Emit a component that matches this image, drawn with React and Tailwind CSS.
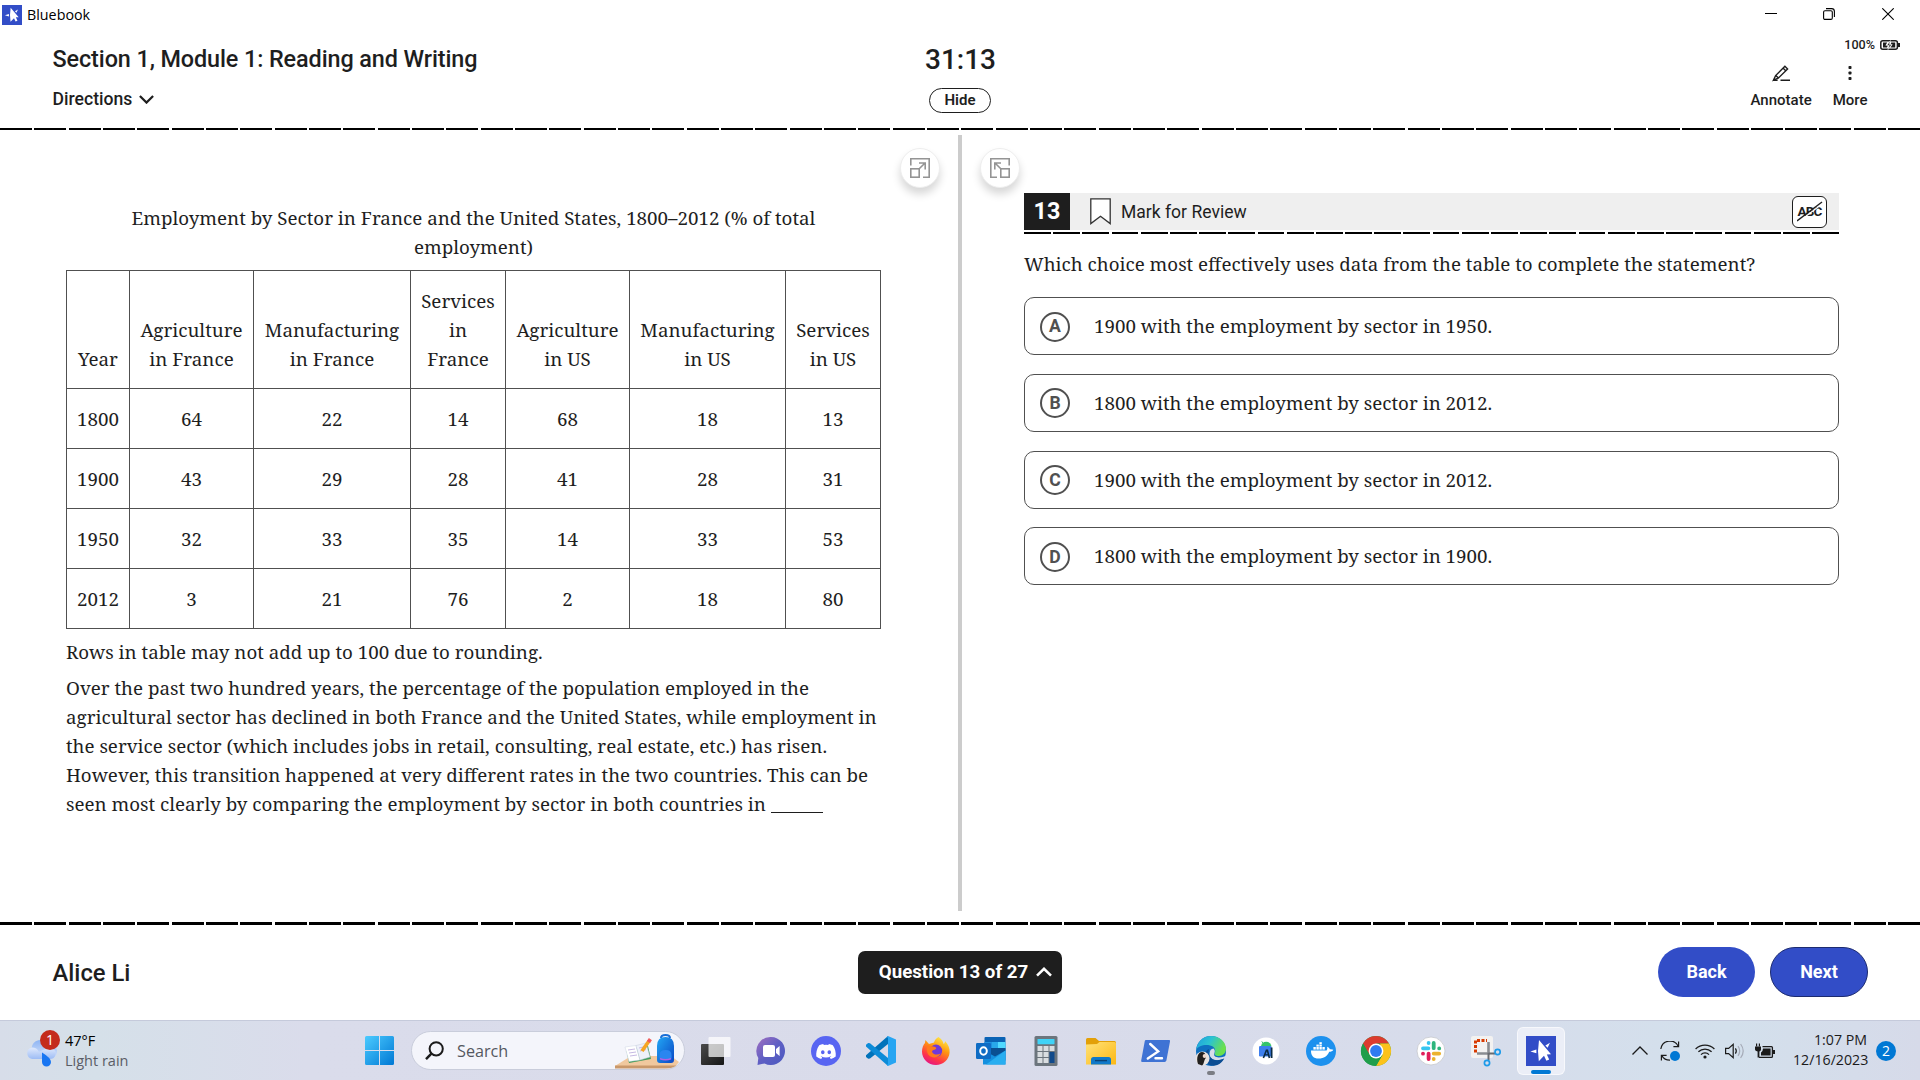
import React from "react";

const SERIF = "font-['Noto_Serif',serif]";

const columns = [
  { label: ["Year"], w: "w-[63px]" },
  { label: ["Agriculture", "in France"], w: "w-[124px]" },
  { label: ["Manufacturing", "in France"], w: "w-[157px]" },
  { label: ["Services", "in", "France"], w: "w-[95px]" },
  { label: ["Agriculture", "in US"], w: "w-[124px]" },
  { label: ["Manufacturing", "in US"], w: "w-[156px]" },
  { label: ["Services", "in US"], w: "w-[95px]" },
];

const rows = [
  [1800, 64, 22, 14, 68, 18, 13],
  [1900, 43, 29, 28, 41, 28, 31],
  [1950, 32, 33, 35, 14, 33, 53],
  [2012, 3, 21, 76, 2, 18, 80],
];

const passage = [
  "Over the past two hundred years, the percentage of the population employed in the",
  "agricultural sector has declined in both France and the United States, while employment in",
  "the service sector (which includes jobs in retail, consulting, real estate, etc.) has risen.",
  "However, this transition happened at very different rates in the two countries. This can be",
];

const choices = [
  ["A", "1900 with the employment by sector in 1950."],
  ["B", "1800 with the employment by sector in 2012."],
  ["C", "1900 with the employment by sector in 2012."],
  ["D", "1800 with the employment by sector in 1900."],
];

function Star({ className }) {
  return (
    <svg viewBox="0 0 30 30" className={className}>
      <rect width="30" height="30" fill="#324dc7" />
      <path d="M13 4L25 18.2L20.8 18.4L23.2 23.6L20.4 24.8L18 19.8L12.8 25.2L12 15Z" fill="#fff" />
      <path d="M4.4 15.4L10.4 13.4V17.2Z" fill="#fff" />
      <path d="M24 6.8L19.4 9.4L21.6 11.8Z" fill="#fff" />
    </svg>
  );
}

function TitleBar() {
  return (
    <div className="flex h-7 items-start justify-between">
      <div className="flex items-center gap-[5px] pt-1 pl-[2px]">
        <Star className="size-5" />
        <span className="pt-px font-['Open_Sans',sans-serif] text-[14.3px] leading-5 text-black">Bluebook</span>
      </div>
      <div className="flex pt-2 pr-[26px]">
        <svg viewBox="0 0 12 12" className="mr-[46px] size-3" stroke="#000" fill="none"><path d="M0 5.5H12" /></svg>
        <svg viewBox="0 0 12 12" className="mr-[47px] size-3" stroke="#000" fill="none" strokeWidth="1.1">
          <rect x=".6" y="2.7" width="8.7" height="8.7" rx="1.4" />
          <path d="M3 .6H8.6A2.8 2.8 0 0 1 11.4 3.4V9" />
        </svg>
        <svg viewBox="0 0 12 12" className="size-3" stroke="#000" fill="none" strokeWidth="1.1"><path d="M.3 .3L11.7 11.7M11.7 .3L.3 11.7" /></svg>
      </div>
    </div>
  );
}

function Header() {
  return (
    <header className="grid h-[100px] grid-cols-3 text-[#1e1e1e]">
      <div className="pl-[52.5px]">
        <h1 className="pt-[16px] text-[23.4px] leading-[30px] font-medium tracking-[-0.1px]">Section 1, Module 1: Reading and Writing</h1>
        <div className="mt-[14px] flex items-center gap-[7px] text-[17.6px] leading-[22px] font-medium">
          Directions
          <svg viewBox="0 0 15 9" className="h-[9px] w-[15px]" fill="none" stroke="#1e1e1e" strokeWidth="2.2"><path d="M.9 1L7.5 7.6L14.1 1" /></svg>
        </div>
      </div>
      <div className="flex flex-col items-center">
        <div className="pt-[15px] pl-px text-[28px] leading-[34px] font-medium">31:13</div>
        <button className="mt-[11px] flex h-[25px] w-[62px] justify-center rounded-full border border-[#1e1e1e] text-[15px] leading-[23px] font-semibold">Hide</button>
      </div>
      <div className="flex flex-col items-end">
        <div className="flex items-center gap-[5px] pt-[9px] pr-5 text-[12.6px] leading-[15px] font-medium">
          100%
          <svg viewBox="0 0 20 10" className="h-[10px] w-5">
            <rect x=".8" y=".8" width="16.6" height="8.4" rx="2" fill="none" stroke="#1e1e1e" strokeWidth="1.5" />
            <rect x="18" y="3" width="2" height="4" fill="#1e1e1e" />
            <path d="M3 2.6H7.2L5.4 5.6H7.8L7 7.6H3ZM11.2 2.6H15.2V7.4H10.5L12.6 4.4H10.6Z" fill="#1e1e1e" />
            <path d="M10.4 .6L6.8 5.4H9.2L8 9.6L11.8 4.4H9.4Z" fill="#1e1e1e" stroke="#fff" strokeWidth=".6" />
          </svg>
        </div>
        <div className="flex gap-[21px] pt-[13px] pr-[52.5px] text-[15px] leading-[18px] font-medium">
          <div className="flex flex-col items-center gap-[9px]">
            <svg viewBox="0 0 18 17" className="h-[17px] w-[18px]" fill="none" stroke="#1e1e1e" strokeWidth="1.4">
              <path d="M1.4 15.2L3.6 10.6L12.9 1.2L15.6 3.9L6.2 13.2L1.4 15.2ZM3.8 10.4L6.4 13M11 3.1L13.7 5.8" />
              <path d="M8.5 15.2H18M1 15.2H5.6" />
            </svg>
            Annotate
          </div>
          <div className="flex flex-col items-center gap-[9px]">
            <svg viewBox="0 0 4 17" className="h-[17px] w-1" fill="#1e1e1e">
              <rect x=".5" y="1" width="3" height="3" rx=".8" /><rect x=".5" y="6.5" width="3" height="3" rx=".8" /><rect x=".5" y="12" width="3" height="3" rx=".8" />
            </svg>
            More
          </div>
        </div>
      </div>
    </header>
  );
}

function ExpandButton({ flip }) {
  return (
    <button className="flex size-10 items-center justify-center rounded-full border border-[#eee] bg-white shadow-[0_6px_8px_rgba(0,0,0,0.16)]">
      <svg viewBox="0 0 20 20" className={flip ? "size-5 -scale-x-100" : "size-5"} fill="none" stroke="#949494" strokeWidth="1.6">
        <path d="M.8 7.5V.8H19.2V19.2H13" />
        <rect x=".8" y="10.8" width="8.4" height="8.4" />
        <path d="M9.2 10.8L15 5M9 5H15.2V11.4" />
      </svg>
    </button>
  );
}

function DataTable() {
  return (
    <table className="mt-[9px] w-[815px] table-fixed border-collapse text-center">
      <thead>
        <tr className="h-[118px]">
          {columns.map((c, i) => (
            <th key={i} className={`${c.w} border border-[#505050] p-0 pb-[15px] align-bottom font-normal`}>
              {c.label.map((l) => <div key={l}>{l}</div>)}
            </th>
          ))}
        </tr>
      </thead>
      <tbody>
        {rows.map((r) => (
          <tr key={r[0]} className="h-[60px]">
            {r.map((v, i) => <td key={i} className="border border-[#505050] p-0 pb-px">{v}</td>)}
          </tr>
        ))}
      </tbody>
    </table>
  );
}

function Passage() {
  return (
    <section className="flex w-[958px] justify-between pl-[66px]">
      <div className={`${SERIF} w-[815px] pt-[73px] text-[18.76px] leading-[29px] whitespace-nowrap text-[#1e1e1e]`}>
        <div className="text-center">
          <div>Employment by Sector in France and the United States, 1800–2012 (% of total</div>
          <div>employment)</div>
        </div>
        <DataTable />
        <p className="pt-[8px]">Rows in table may not add up to 100 due to rounding.</p>
        <div className="pt-[7px]">
          {passage.map((l) => <p key={l}>{l}</p>)}
          <p>seen most clearly by comparing the employment by sector in both countries in <span className="inline-block h-[24px] w-[52px] border-b border-[#1e1e1e] align-top" /></p>
        </div>
      </div>
      <div className="pt-[18px] pr-[18px]"><ExpandButton /></div>
    </section>
  );
}

function Question() {
  return (
    <section className="flex flex-1 pl-[17.5px]">
      <div className="w-[44.5px] pt-[18px]"><ExpandButton flip /></div>
      <div className="w-[815px] pt-[63px] text-[#1e1e1e]">
        <div className="flex h-[37px] items-center bg-[#efefef]">
          <div className="flex h-full w-[46px] items-center justify-center bg-[#1e1e1e] text-[23.4px] font-bold text-white">13</div>
          <svg viewBox="0 0 21 27" className="ml-5 h-[27px] w-[21px]" fill="#fff" stroke="#333" strokeWidth="1.3"><path d="M.8 .8H20.2V25.6L10.5 18.2L.8 25.6Z" /></svg>
          <span className="ml-[10px] flex-1 pt-[2px] text-[17.55px]">Mark for Review</span>
          <div className="relative mr-3 flex h-8 w-[35px] items-center justify-center rounded-md border-[1.5px] border-[#1e1e1e] bg-white text-[13.5px] font-bold tracking-[-0.8px]">
            ABC
            <svg viewBox="0 0 26 21" className="absolute h-[21px] w-[26px]"><path d="M1 21.2L26 2.2" stroke="#fff" strokeWidth="1.4" /><path d="M0 20L25 1" stroke="#1e1e1e" strokeWidth="1.4" /></svg>
          </div>
        </div>
        <div className="mt-[2px] h-[2px] bg-[repeating-linear-gradient(90deg,#000_0_26.8px,transparent_26.8px_29.19px)]" />
        <p className={`${SERIF} pt-[15px] text-[18.75px] leading-[29px] whitespace-nowrap`}>
          Which choice most effectively uses data from the table to complete the statement?
        </p>
        <div className="mt-[19px] flex flex-col gap-[18.8px]">
          {choices.map(([k, t]) => (
            <div key={k} className="flex h-[58px] items-center rounded-[10px] border border-[#505050] pl-[15px]">
              <span className="mt-px flex size-[30px] items-center justify-center rounded-full border-2 border-[#505050] text-[17.6px] font-bold text-[#505050]">{k}</span>
              <span className={`${SERIF} ml-6 pb-px text-[18.75px] leading-[29px] whitespace-nowrap`}>{t}</span>
            </div>
          ))}
        </div>
      </div>
    </section>
  );
}

function Footer() {
  return (
    <footer className="grid h-[95px] grid-cols-3 items-start text-[#1e1e1e]">
      <div className="pt-[33px] pl-[52.5px] text-[23.8px] leading-[30px] font-medium">Alice Li</div>
      <div className="flex justify-center pt-[26px]">
        <button className="flex h-[43px] w-[204px] items-center justify-center gap-[8px] rounded-[7px] bg-[#1e1e1e] pb-px pl-[11px] text-[18.7px] leading-[26px] font-bold whitespace-nowrap text-white">
          Question 13 of 27
          <svg viewBox="0 0 16 10" className="h-[10px] w-4" fill="none" stroke="#fff" strokeWidth="2.6"><path d="M1 8.6L8 1.8L15 8.6" /></svg>
        </button>
      </div>
      <div className="flex justify-end gap-[15px] pt-[22px] pr-[52px] text-[18px] font-bold text-white">
        <button className="h-[50px] w-[97px] rounded-full bg-[#324dc7] pb-px">Back</button>
        <button className="h-[50px] w-[98px] rounded-full border border-[#1c2b70] bg-[#324dc7] pb-px">Next</button>
      </div>
    </footer>
  );
}

const Ico = ({ children }) => <svg viewBox="0 0 30 30" className="size-[30px] overflow-visible">{children}</svg>;

function Gradients() {
  return (
    <svg className="absolute size-0">
      <defs>
        <linearGradient id="win" x1="0" y1="0" x2="1" y2="1"><stop offset="0" stopColor="#4ccbff" /><stop offset="1" stopColor="#0078d4" /></linearGradient>
        <linearGradient id="cloud" x1="0" y1="0" x2="0" y2="1"><stop offset="0" stopColor="#8db4f3" /><stop offset="1" stopColor="#dbe6fb" /></linearGradient>
        <linearGradient id="cloudFront" x1="0" y1="0" x2="0" y2="1"><stop offset="0" stopColor="#dfe9fc" /><stop offset="1" stopColor="#9dbcf5" /></linearGradient>
        <linearGradient id="chat" x1="0" y1="0" x2="1" y2="1"><stop offset="0" stopColor="#a26fc0" /><stop offset=".5" stopColor="#5f5fc4" /><stop offset="1" stopColor="#4a58c0" /></linearGradient>
        <linearGradient id="ff" x1=".8" y1="0" x2=".3" y2="1"><stop offset="0" stopColor="#fff44f" /><stop offset=".4" stopColor="#ff980e" /><stop offset=".75" stopColor="#ff3647" /><stop offset="1" stopColor="#e31587" /></linearGradient>
        <linearGradient id="folder" x1="0" y1="0" x2="1" y2="1"><stop offset="0" stopColor="#ffe27a" /><stop offset="1" stopColor="#fcb813" /></linearGradient>
        <linearGradient id="edge" x1="0" y1="0" x2="1" y2=".4"><stop offset="0" stopColor="#1d9de0" /><stop offset=".5" stopColor="#2cc3d0" /><stop offset="1" stopColor="#6be04b" /></linearGradient>
        <linearGradient id="bag" x1="0" y1="0" x2="1" y2="1"><stop offset="0" stopColor="#22a7f5" /><stop offset="1" stopColor="#0b47c4" /></linearGradient>
        <linearGradient id="tv" x1="0" y1="0" x2="1" y2="1"><stop offset="0" stopColor="#4a4a4a" /><stop offset="1" stopColor="#161616" /></linearGradient>
      </defs>
    </svg>
  );
}

const apps = [
  <Ico key="tv"><rect y="8" width="23" height="21" rx="1" fill="url(#tv)" /><rect x="7.5" y="1" width="22" height="20" rx="1" fill="#fff" fillOpacity=".72" /></Ico>,
  <Ico key="chat"><path d="M15 1A14 14 0 1 1 8.5 27.4L1.5 29L2.3 22A14 14 0 0 1 15 1Z" fill="url(#chat)" /><rect x="7" y="9" width="12" height="12" rx="2" fill="#fff" /><path d="M20 13L23.6 10V20L20 17Z" fill="#fff" /></Ico>,
  <Ico key="dis"><circle cx="15" cy="15" r="15" fill="#5865f2" /><path transform="translate(5.2 5.6) scale(.82)" d="M20.3 4.4A19.8 19.8 0 0 0 15.4 2.9l-.6 1.2a18.3 18.3 0 0 0-5.5 0L8.6 2.9A19.7 19.7 0 0 0 3.7 4.4C.5 9 -.3 13.6.1 18.1a19.9 19.9 0 0 0 6 3l1.3-2-1.9-.9.4-.3a14.2 14.2 0 0 0 12.1 0l.4.3-1.9.9 1.3 2a19.8 19.8 0 0 0 6-3c.5-5.2-.8-9.7-3.5-13.7zM8 15.3c-1.2 0-2.1-1.1-2.1-2.4s.9-2.4 2.1-2.4 2.2 1.1 2.2 2.4-1 2.4-2.2 2.4zm8 0c-1.2 0-2.2-1.1-2.2-2.4s1-2.4 2.2-2.4 2.1 1.1 2.1 2.4-.9 2.4-2.1 2.4z" fill="#fff" /></Ico>,
  <Ico key="code"><path d="M22 0L0 19.2V21L2.2 22.8L4 22.6L22 8Z" fill="#0072ba" /><path d="M22 30L0 10.6V8.8L2.2 7L4 7.2L22 22Z" fill="#0c8bd8" /><path d="M22 0L30 3.6V26.4L22 30L20.5 28.5H22V1.5H20.5Z" fill="#27a5f2" /></Ico>,
  <Ico key="ff"><path d="M17.5 1C21 3 22.2 5.8 22.6 8C23.6 7.4 24 6.4 24 5C27 8 29 12 28.6 16.5C28 24 22 29 15 29C7 29 1 23 1 15.5C1 12 2.4 8.6 4 7L4.4 4L8 8L13 6.4C13.6 4 15.4 2 17.5 1Z" fill="url(#ff)" /><circle cx="15" cy="14.8" r="6.2" fill="#7139d8" /><path d="M6.5 9.2L12 10.4C14.4 10.6 15.4 11.4 15.2 12.4C14.6 14 11.6 13.4 11 15.4C11.4 18.6 16.4 19.4 19.6 17.6C18.4 22 10.4 23 7.2 18.4C5.6 15.8 5.4 12 6.5 9.2Z" fill="#ff7a1c" /></Ico>,
  <Ico key="out"><rect x="8.5" y="1" width="21" height="24" rx="1" fill="#0a63b5" /><rect x="8.5" y="6" width="14" height="7" fill="#1f8fe0" /><rect x="22" y="6" width="7.5" height="7" fill="#50d9ff" /><rect x="16" y="6" width="6" height="7" fill="#28a8ea" /><path d="M7 18L29.5 14V28.6H7Z" fill="#1490df" /><path d="M8 14.5L19 20.4L29.5 14.5V12H8Z" fill="#0a4f92" /><path d="M29.5 14.5V28.6H10Z" fill="#29aef0" /><rect y="7" width="15" height="16" rx="1.2" fill="#0f6cc4" /><ellipse cx="7.5" cy="15" rx="3.3" ry="3.7" fill="none" stroke="#fff" strokeWidth="2" /></Ico>,
  <Ico key="calc"><rect x="3.5" width="23" height="30" rx="1.5" fill="#6c757d" /><rect x="6.5" y="3" width="17" height="5.2" rx=".6" fill="#3fd3f7" /><g fill="#d9dde0"><rect x="6.5" y="10" width="5" height="5" /><rect x="12.5" y="10" width="5" height="5" /><rect x="18.5" y="10" width="5" height="5" /><rect x="6.5" y="16" width="5" height="5" /><rect x="12.5" y="16" width="5" height="5" /><rect x="6.5" y="22" width="5" height="5" /><rect x="12.5" y="22" width="5" height="5" /></g><rect x="18.5" y="16" width="5" height="11" fill="#114a8b" /></Ico>,
  <Ico key="files"><path d="M0 3.5Q0 2 1.5 2H9.5L13 5H28.5Q30 5 30 6.5V12H0Z" fill="#e3a008" /><path d="M0 8.5L11 8L13.5 6H28.5Q30 6 30 7.5V28.4H0Z" fill="url(#folder)" /><path d="M5 28.4V23.5Q5 21 7.5 21H22.5Q25 21 25 23.5V28.4Z" fill="#0f79c9" /><path d="M9 24.6H21" stroke="#0a4275" strokeWidth="1.4" /></Ico>,
  <Ico key="ps"><path d="M5 4H28Q29.4 4 29 5.4L25.4 24.6Q25 26 23.6 26H1.4Q-.2 26 .2 24.4L3.8 5Q4 4 5 4Z" fill="#3f73d4" /><path d="M9.2 8L17.2 15.4L6.8 22.6M14.5 22.2H21" fill="none" stroke="#fff" strokeWidth="2.4" strokeLinecap="round" /></Ico>,
  <div key="edge" className="relative flex flex-col items-center">
    <Ico><circle cx="15" cy="15" r="15" fill="#0f6fc0" /><path d="M.2 14C1 6 7 0 15 0C23.6 0 30 6 30 12.6C30 17.4 26.6 20 23 20C20 20 18.2 18.8 18.6 17.4C20 15 19.4 10.4 14 9.4C8 8.4 2 10 .2 14Z" fill="url(#edge)" /><path d="M18.4 17C16.8 21.4 22 22.4 28.4 20.4C30.4 19 31 21 28.4 22.4C21 26 13 24 13.6 17C14 14 15 12.6 17.6 12.4C19.2 14 19 15.6 18.4 17Z" fill="#d8dcea" /><path d="M28.2 22.6C24 31 15 31 11 27.6C6 23 8 15 13 13C11 20 16 27.6 28.2 22.6Z" fill="#0c4d93" /><circle cx="6.5" cy="22.5" r="7" fill="#e8e4e2" /><path d="M2 28C0 22 2 16 6 16C10 16 9 20 10 22C8 23 8 29 6 29.4Z" fill="#22201f" /><circle cx="8.6" cy="20" r="1.9" fill="#f0d9cc" /></Ico>
    <span className="absolute top-[35px] h-1 w-2 rounded-full bg-[#7b7d84]" />
  </div>,
  <Ico key="as"><circle cx="15" cy="15" r="13.5" fill="#fff" /><path d="M10 10.4A5.2 4.6 0 0 1 20.4 10.4Z" fill="#35c46c" /><path d="M10.8 5.4L12.4 7.6" stroke="#35c46c" strokeWidth="1" /><rect x="8" y="10" width="12.5" height="10.5" rx="1.2" fill="#3d7fee" /><path d="M12.4 22L15.4 14.2H16.4L18.4 22" stroke="#0b2b44" strokeWidth="1.6" fill="none" /><path d="M13.8 18.8H17.4" stroke="#0b2b44" strokeWidth="1.2" /><path d="M20.6 11.5V22" stroke="#0b2b44" strokeWidth="1.8" /></Ico>,
  <Ico key="dk"><circle cx="15" cy="15" r="15" fill="#1d91ee" /><path d="M5 14.4H20.6C21.6 13.4 21.4 11.8 21 10.8C22.6 11.2 23.6 12.2 23.8 13.2C25 13 26.4 13.2 27.4 13.8C26.6 15.2 25 15.8 23.2 15.8C21.6 20 18 22.6 12.6 22.6C7.6 22.6 4.8 19.4 5 14.4Z" fill="#fff" /><g fill="#fff"><rect x="7.4" y="11" width="2.4" height="2.6" /><rect x="10.4" y="11" width="2.4" height="2.6" /><rect x="13.4" y="11" width="2.4" height="2.6" /><rect x="16.4" y="11" width="2.4" height="2.6" /><rect x="10.4" y="8.6" width="2.4" height="2" /><rect x="13.4" y="8.6" width="2.4" height="2" /><rect x="13.4" y="6.2" width="2.4" height="2" /></g></Ico>,
  <Ico key="chr"><circle cx="15" cy="15" r="15" fill="#1f9e4b" /><path d="M15 0A15 15 0 0 1 28 7.5H15L8.5 18.7L2 7.5A15 15 0 0 1 15 0Z" fill="#dc3b2e" /><path d="M28 7.5A15 15 0 0 1 15 30L21.5 18.7L19 7.5Z" fill="#fcc21b" /><path d="M2 7.5L8.5 18.7L15 22.5L21.5 18.7L15 30A15 15 0 0 1 2 7.5Z" fill="#1f9e4b" /><circle cx="15" cy="15" r="7.4" fill="#fff" /><circle cx="15" cy="15" r="5.9" fill="#2f7bf0" /></Ico>,
  <Ico key="sl"><circle cx="15" cy="15" r="14" fill="#fff" stroke="#c4c6cc" strokeWidth=".8" /><g strokeWidth="3.8" strokeLinecap="round"><path d="M12.6 6.9V7M7 12.3H12.4" stroke="#36c5f0" /><path d="M17.7 6.9V12.2M23.2 12.3V12.4" stroke="#2eb67d" /><path d="M17.7 17.6H23.2M17.7 23V23.1" stroke="#ecb22e" /><path d="M12.6 17.6V23.1M7 17.6V17.7" stroke="#e01e5a" /></g></Ico>,
  <Ico key="sn"><rect x="0" y="0" width="22" height="22" rx="2" fill="#f3f2f1" /><path d="M4.5 16.5V4.5H16" fill="none" stroke="#d83b01" strokeWidth="3" strokeDasharray="3 1.5" /><path d="M17.5 6V17.5H6" fill="none" stroke="#8a8d91" strokeWidth="2.6" /><path d="M17.5 17.5H24M17.5 17V24" stroke="#686b70" strokeWidth="2" /><circle cx="26.6" cy="16" r="2.6" fill="none" stroke="#1e9be9" strokeWidth="1.7" /><circle cx="16" cy="27" r="2.6" fill="none" stroke="#1e9be9" strokeWidth="1.7" /></Ico>,
  <div key="bb" className="relative flex h-12 w-12 items-center justify-center rounded-md border border-white/60 bg-[#ebeef7]">
    <Star className="size-[30px]" />
    <span className="absolute bottom-0 h-1 w-5 rounded-full bg-[#0078d4]" />
  </div>,
];

function Taskbar() {
  return (
    <div className="flex h-[60px] items-center border-t border-[#c5cadb] bg-[linear-gradient(90deg,#d7dde9_0%,#d5e0e9_5%,#dadceb_16%,#d9dbea_50%,#d7dceb_75%,#d3e0ec_90%,#d6dae9_100%)] font-['Open_Sans',sans-serif]">
      <Gradients />
      <div className="flex w-[365px] items-center pl-[26px]">
        <div className="relative h-[42px] w-[34px]">
          <svg viewBox="0 0 34 38" className="h-[38px] w-[34px]">
            <path d="M6 29A5.8 5.8 0 0 1 5.6 18A9 9 0 0 1 22 14A6.6 6.6 0 0 1 25 29Z" fill="url(#cloud)" />
            <path d="M6 29A5.8 5.8 0 0 1 6 17.6Q11 17.6 13 22Q20 18 25 18Q31 20 29.5 25Q28.5 29 24 29Z" fill="url(#cloudFront)" />
            <path d="M16 22.5Q25 28 25 32A4.5 4.5 0 0 1 16 32Z" fill="#1976f2" />
          </svg>
          <span className="absolute top-0 left-[14px] flex size-5 items-center justify-center rounded-full bg-[#c42b1c] text-[14px] leading-none text-white">1</span>
        </div>
        <div className="pl-[5px] text-[14.5px] leading-[20px]">
          <div className="text-black">47°F</div>
          <div className="text-[#5a5d66]">Light rain</div>
        </div>
      </div>
      <svg viewBox="0 0 29 29" className="size-[29px] shrink-0" fill="url(#win)">
        <path d="M0 1.5Q0 0 1.5 0H14V14H0ZM15 0H27.5Q29 0 29 1.5V14H15ZM0 15H14V29H1.5Q0 29 0 27.5ZM15 15H29V27.5Q29 29 27.5 29H15Z" />
      </svg>
      <div className="ml-[17px] flex h-[39px] w-[274px] shrink-0 items-center overflow-hidden rounded-full border border-[#c9cddb] bg-[#f4f5fb] pl-[13px]">
        <svg viewBox="0 0 19 19" className="size-[19px]" fill="none" stroke="#1b1b1b" strokeWidth="2"><circle cx="11.2" cy="7.8" r="6.6" /><path d="M6.4 12.6L1 18.2" strokeWidth="2.4" /></svg>
        <span className="flex-1 pt-px pl-[13px] text-[16.2px] text-[#55585f]">Search</span>
        <svg viewBox="0 0 66 38" className="h-[38px] w-[66px]">
          <path d="M0 34L16 24H56L64 30L60 35H0Z" fill="#f0c89e" /><path d="M0 33.5H62L58 36.5H0Z" fill="#c9986a" />
          <path d="M11 17L33 14L36 27L14 31Z" fill="#3f9b5a" /><path d="M10 15L21 13.5L25 28L14 29.5Z" fill="#fff" stroke="#cfd6e4" strokeWidth=".5" /><path d="M21 13.5L31 11L35 25L25 28Z" fill="#eef1fa" stroke="#c5ccdc" strokeWidth=".5" />
          <path d="M13 18L20 17M14 21L21 20M15 24L22 23M24 16L30 14.6M25 19L31 17.6" stroke="#b7a8dc" strokeWidth=".8" />
          <path d="M27 19L34 9" stroke="#f6a623" strokeWidth="3.6" /><path d="M33.4 10L35.4 7.2" stroke="#ef5b5b" strokeWidth="3.8" />
          <path d="M46 6Q46 3 50.5 3Q55 3 55 6" fill="none" stroke="#1b6fd6" strokeWidth="2" /><path d="M42 14Q42 5 50.5 5Q59 5 59 14V28Q59 31 56 31H45Q42 31 42 28Z" fill="url(#bag)" /><path d="M44.5 23Q44.5 18 50.5 18Q56.5 18 56.5 23V26Q56.5 28 54.5 28H46.5Q44.5 28 44.5 26Z" fill="#2a86f0" /><path d="M45 26.6Q50.5 29 56 26.6" stroke="#b45ee6" strokeWidth="1.4" fill="none" />
        </svg>
        <span className="w-[3px]" />
      </div>
      <div className="ml-[3.5px] flex shrink-0">
        {apps.map((a, i) => <div key={i} className="flex h-12 w-[55px] items-center justify-center">{a}</div>)}
      </div>
      <div className="ml-auto flex items-center pr-6">
        <svg viewBox="0 0 16 9" className="h-[9px] w-4" fill="none" stroke="#1b1b1b" strokeWidth="1.3"><path d="M.5 8.5L8 1L15.5 8.5" /></svg>
        <svg viewBox="0 0 20 20" className="ml-3 size-5" fill="none" stroke="#1b1b1b" strokeWidth="1.2"><path d="M.8 8A9.3 9.3 0 0 1 18.4 5.4M18.6 .6V5.6H13.4M10 19.2A9.3 9.3 0 0 1 1.8 14.6M1.4 19.6V14.4H6.6" /><circle cx="15" cy="15" r="5" fill="#0078d4" stroke="none" /></svg>
        <svg viewBox="0 0 20 16" className="ml-[15px] h-4 w-5" fill="none" stroke="#1b1b1b" strokeWidth="1.3"><path d="M.6 6A13.4 13.4 0 0 1 19.4 6M3.4 8.8A9.4 9.4 0 0 1 16.6 8.8M6 11.6A5.7 5.7 0 0 1 14 11.6" /><circle cx="10" cy="14" r="1.6" fill="#1b1b1b" stroke="none" /></svg>
        <svg viewBox="0 0 20 18" className="ml-[10px] h-[18px] w-5" fill="none" stroke="#1b1b1b" strokeWidth="1.2"><path d="M.6 6.4H3.6L8.2 2.4V15.6L3.6 11.6H.6Z" /><path d="M10.4 6.4Q12.2 9 10.4 11.6" /><path d="M13 4.2Q16.4 9 13 13.8M15.6 2Q20.8 9 15.6 16" stroke="#a6abb8" /></svg>
        <svg viewBox="0 0 20 16" className="ml-[10px] h-4 w-5"><path d="M0 3.4H6V6.4Q6 8 4.4 8.4V14.6H2.6V8.4Q0 8 0 6.4Z" fill="#1b1b1b" /><path d="M1.6 .4V3.6M4.4 .4V3.6" stroke="#1b1b1b" strokeWidth="1.2" /><path d="M7.5 3.6H16.4Q17.4 3.6 17.4 4.6V13.4Q17.4 14.4 16.4 14.4H4" fill="none" stroke="#1b1b1b" strokeWidth="1.3" /><path d="M8 5.6H15.6V12.4H6V9.4Q8 8.4 8 5.6ZM18 7H20V11H18Z" fill="#1b1b1b" /></svg>
        <div className="ml-[18px] w-[74px] pb-px text-right text-[14.2px] leading-5 whitespace-nowrap text-[#1b1b1b]">
          <div>1:07 PM</div>
          <div>12/16/2023</div>
        </div>
        <span className="ml-[9px] flex size-5 items-center justify-center rounded-full bg-[#0078d4] text-[14px] leading-none text-white">2</span>
      </div>
    </div>
  );
}

export default function App() {
  return (
    <div className="flex h-[1080px] w-[1920px] flex-col overflow-hidden bg-white font-[Roboto,sans-serif]">
      <TitleBar />
      <Header />
      <div className="h-[2px] bg-[repeating-linear-gradient(90deg,#000_0_32px,transparent_32px_34.33px)]" />
      <main className="flex h-[792px]">
        <Passage />
        <div className="mt-[5px] h-[776px] w-1 bg-[#ccc]" />
        <Question />
      </main>
      <div className="h-[3px] bg-[repeating-linear-gradient(90deg,#000_0_32px,transparent_32px_34.33px)]" />
      <Footer />
      <Taskbar />
    </div>
  );
}
